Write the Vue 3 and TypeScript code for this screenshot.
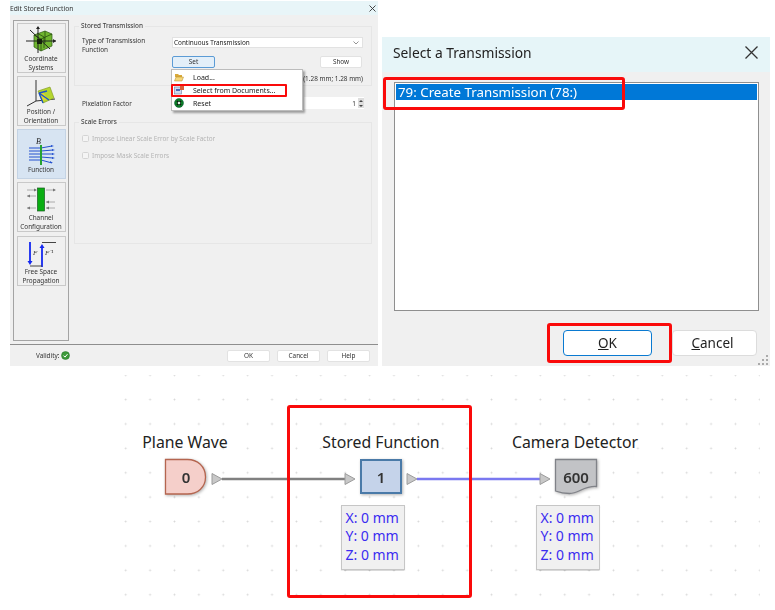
<script setup lang="ts">
const infoLines: string[] = ['X: 0 mm', 'Y: 0 mm', 'Z: 0 mm']
</script>

<template>
  <div class="page">
    <div class="top">
      <section class="dlg">
        <header class="dlg-title">
          <span>Edit Stored Function</span>
          <svg class="dlg-close" width="7" height="7" viewBox="0 0 7 7"><path d="M.5.5l6 6M6.500.5l-6 6" stroke="#333" stroke-width=".9" fill="none" /></svg>
        </header>
        <div class="dlg-main">
          <nav class="side">
            <button class="tile">
              <svg width="32" height="28" viewBox="0 0 32 28">
                <path d="M9 9l11-4 7 3v12l-11 5-7-4z" fill="#6fb52e" stroke="#2c5a12" stroke-width=".7" />
                <path d="M9 9l7 4 11-5M16 13v12M12 7l7 4v11M20 5v12" fill="none" stroke="#1e3d0c" stroke-width=".7" />
                <path d="M1 15h30M13 1v26M5 4l20 19" stroke="#222" stroke-width="1" fill="none" />
                <path d="M31 15l-3-2v4zM13 0l-2 3h4z" fill="#222" />
                <rect x="12" y="13" width="5" height="5" fill="#16220c" />
              </svg>
              <span>Coordinate<br />Systems</span>
            </button>
            <button class="tile">
              <svg width="32" height="28" viewBox="0 0 32 28">
                <path d="M11 1v21M11 22l19-2M11 22l-9 5" stroke="#333" stroke-width="1" fill="none" />
                <path d="M13 12l12-4 4 11-11 5z" fill="#b5d62f" stroke="#7b9420" stroke-width=".6" />
                <path d="M14 13l4 9 4-2-4-8z" fill="#f0d72e" opacity=".7" />
                <path d="M14 14l10 7M14 14l4 10M14 14l8-2" stroke="#1c54c8" stroke-width="1.300" fill="none" />
              </svg>
              <span>Position /<br />Orientation</span>
            </button>
            <button class="tile tile-on">
              <svg width="32" height="28" viewBox="0 0 32 28">
                <text x="11" y="7" class="tile-b">B</text>
                <path d="M4 11h12l11-2M4 14h12l12-1M4 17h24M4 20h12l12 1M4 23h12l11 3" stroke="#2351cf" stroke-width="1" fill="none" />
                <path d="M29 9l-3-1v2zM30 13l-3-1v2zM30 17l-3-1v2zM30 21l-3-1v2zM28 26l-3-2v2z" fill="#2351cf" />
                <path d="M16 8v20" stroke="#26a232" stroke-width="2" />
              </svg>
              <span>Function</span>
            </button>
            <button class="tile">
              <svg width="32" height="26" viewBox="0 0 32 26">
                <rect x="12.500" y="1" width="7" height="23" fill="#0aae12" stroke="#185c20" stroke-width=".7" />
                <path d="M2 3h9M21 3h9M2 9h9M21 15h9M2 21h9M21 21h9" stroke="#999" stroke-width=".8" fill="none" />
                <path d="M12 3l-3-1.500v3zM31 3l-3-1.500v3zM2 9l3-1.500v3zM21 15l3-1.500v3zM2 21l3-1.500v3zM21 21l3-1.500v3z" fill="#777" />
              </svg>
              <span>Channel<br />Configuration</span>
            </button>
            <button class="tile">
              <svg width="32" height="26" viewBox="0 0 32 26">
                <path d="M5 1v21M17 26V5" stroke="#1428f0" stroke-width="1.800" fill="none" />
                <path d="M5 24l-2.500-4h5zM17 3l-2.500 4h5z" fill="#1428f0" />
                <path d="M5 25h12M17 1.500h14" stroke="#444" stroke-width="1.200" fill="none" />
                <text x="8" y="14" class="tile-f">F</text>
                <text x="20" y="14" class="tile-f">F⁻¹</text>
              </svg>
              <span>Free Space<br />Propagation</span>
            </button>
          </nav>

          <div class="form">
            <fieldset class="group group-a">
              <legend>Stored Transmission</legend>
              <div class="row-type">
                <label class="lbl-type">Type of Transmission<br />Function</label>
                <div class="combo">
                  <span>Continuous Transmission</span>
                  <svg width="6" height="4" viewBox="0 0 6 4"><path d="M.5.500l2.500 2.500 2.500-2.500" fill="none" stroke="#666" stroke-width=".7" /></svg>
                </div>
              </div>
              <div class="row-btn">
                <button class="btn btn-set">Set</button>
                <button class="btn btn-show">Show</button>
              </div>
              <div class="row-size">(1.28 mm; 1.28 mm)</div>
            </fieldset>

            <div class="row-pix">
              <span>Pixelation Factor</span>
              <div class="spin">
                <span>1</span>
                <span class="spin-arrows">
                  <i class="up"></i>
                  <i class="down"></i>
                </span>
              </div>
            </div>

            <fieldset class="group group-b">
              <legend>Scale Errors</legend>
              <label class="chk"><i></i>Impose Linear Scale Error by Scale Factor</label>
              <label class="chk"><i></i>Impose Mask Scale Errors</label>
            </fieldset>

            <div class="menu">
              <div class="menu-item">
                <svg width="10" height="9" viewBox="0 0 10 9">
                  <path d="M1 1h3l1 1h3v2H1z" fill="#d9a93a" />
                  <path d="M.5 8L2 4h7.500L8 8z" fill="#f4d67a" stroke="#b58a2a" stroke-width=".5" />
                </svg>
                <span>Load...</span>
              </div>
              <div class="menu-item menu-mark">
                <svg width="10" height="9" viewBox="0 0 10 9">
                  <rect x=".5" y="1" width="7" height="7" fill="#cfd9ee" stroke="#6c7fa6" stroke-width=".6" />
                  <rect x="2" y="3" width="4" height="2" fill="#4b6bb5" />
                  <rect x="6" y="0" width="4" height="4" fill="#d9603a" />
                </svg>
                <span>Select from Documents...</span>
              </div>
              <div class="menu-item">
                <svg width="10" height="10" viewBox="0 0 10 10">
                  <circle cx="5" cy="5" r="4.500" fill="#0c7d26" stroke="#053" stroke-width=".5" />
                  <path d="M3 3l4 4M7 3l-4 4" stroke="#111" stroke-width="1.500" />
                  <circle cx="5" cy="5" r="1.200" fill="#eee" />
                </svg>
                <span>Reset</span>
              </div>
            </div>
          </div>
        </div>
        <footer class="dlg-foot">
          <span class="validity">Validity:</span>
          <svg width="9" height="9" viewBox="0 0 9 9">
            <circle cx="4.500" cy="4.500" r="4" fill="#3d9a3a" stroke="#24702a" stroke-width=".5" />
            <path d="M2.500 4.600l1.500 1.500 2.500-3" stroke="#fff" stroke-width="1" fill="none" />
          </svg>
          <div class="foot-btns">
            <button class="btn">OK</button>
            <button class="btn">Cancel</button>
            <button class="btn">Help</button>
          </div>
        </footer>
      </section>

      <section class="pick">
        <header class="pick-title">
          <span>Select a Transmission</span>
          <svg width="15" height="15" viewBox="0 0 15 15"><path d="M1.500 1.500l12 12M13.500 1.500l-12 12" stroke="#333" stroke-width="1.300" fill="none" /></svg>
        </header>
        <div class="pick-body">
          <div class="list">
            <div class="list-sel">79: Create Transmission (78:)</div>
          </div>
          <div class="pick-btns">
            <button class="pbtn pbtn-ok"><u>O</u>K</button>
            <button class="pbtn pbtn-cancel"><u>C</u>ancel</button>
          </div>
          <svg class="grip" width="11" height="11" viewBox="0 0 11 11">
            <g fill="#aaa">
              <rect x="8" y="0" width="2" height="2" />
              <rect x="4" y="4" width="2" height="2" />
              <rect x="8" y="4" width="2" height="2" />
              <rect x="0" y="8" width="2" height="2" />
              <rect x="4" y="8" width="2" height="2" />
              <rect x="8" y="8" width="2" height="2" />
            </g>
          </svg>
        </div>
        <i class="mark mark-list"></i>
        <i class="mark mark-ok"></i>
      </section>
    </div>

    <div class="diagram">
      <svg class="wires" width="640" height="235" viewBox="0 0 640 235">
        <path d="M102 104h124" stroke="#808080" stroke-width="2.500" fill="none" />
        <path d="M297 104h124" stroke="#7a78f0" stroke-width="2.500" fill="none" />
        <g fill="#c8c8c8" stroke="#9c9c9c" stroke-width="1">
          <path d="M92 98.500l10 5.500-10 5.500z" />
          <path d="M225 98.500l10 5.500-10 5.500z" />
          <path d="M287 98.500l10 5.500-10 5.500z" />
          <path d="M420 98.500l10 5.500-10 5.500z" />
        </g>
      </svg>

      <div class="cap cap-a">Plane Wave</div>
      <div class="cap cap-b">Stored Function</div>
      <div class="cap cap-c">Camera Detector</div>

      <div class="node node-a">
        <svg width="44" height="38" viewBox="0 0 44 38">
          <path d="M1.500 1.500h22c10 0 18 7 18 17.500s-8 17-18 17h-22z" fill="#f5cfca" stroke="#b5654f" stroke-width="1.300" />
        </svg>
        <span>0</span>
      </div>
      <div class="node node-b"><span>1</span></div>
      <div class="node node-c">
        <svg width="44" height="38" viewBox="0 0 44 38">
          <path d="M1.500 1.500h41v27c-12-1-18 7-27 7-6 0-10-1-14-2.500z" fill="#c2c3c6" stroke="#808288" stroke-width="1.300" />
        </svg>
        <span>600</span>
      </div>

      <div class="info info-b">
        <div v-for="l in infoLines" :key="l">{{ l }}</div>
      </div>
      <div class="info info-c">
        <div v-for="l in infoLines" :key="l">{{ l }}</div>
      </div>

      <i class="frame"></i>
    </div>
  </div>
</template>

<style>
html, body { margin: 0; background: #fff; }
</style>

<style scoped>
.page { width: 775px; height: 610px; overflow: hidden; background: #fff; font-family: "Noto Sans", "Open Sans", sans-serif; color: #222; }
.top { display: flex; align-items: flex-start; height: 366px; }
button { font-family: inherit; padding: 0; }

/* left dialog */
.dlg { width: 368px; height: 365px; margin: 1px 0 0 10px; background: #f0f0f0; display: flex; flex-direction: column; filter: blur(.4px); font-size: 6.4px; flex: none; }
.dlg-title { height: 14px; background: #e8f5f8; display: flex; align-items: center; justify-content: space-between; font-size: 6.700px; padding-right: 2px; color: #333; }
.dlg-main { flex: 1; display: flex; position: relative; }
.side { width: 56px; height: 321px; margin: 5px 0 0 3px; border: 1.500px solid #a4a4a4; padding: 1.500px 2.500px; display: flex; flex-direction: column; gap: 3.250px; box-sizing: border-box; background: #f0f0f0; flex: none; }
.tile { width: 49px; height: 50px; flex: none; border: 1px solid #c9c9c9; background: #f0f0f0; display: flex; flex-direction: column; align-items: center; justify-content: flex-end; font-size: 6.400px; line-height: 9px; color: #333; box-sizing: border-box; }
.tile-on { background: #d7e4f2; border-color: #c4d3e4; padding-bottom: 4.500px; }
.tile-b { font: italic 8px "Liberation Serif", serif; fill: #222; }
.tile-f { font: italic 7px "Liberation Serif", serif; fill: #333; }
.form { flex: 1; position: relative; padding: 0 6px 0 5px; }
.group { border: 1px solid #e6e6e6; margin: 0; padding: 0; position: relative; box-sizing: border-box; width: 298px; }
.group legend { font-size: 6.400px; font-weight: 500; padding: 0 2px; margin-left: 4px; line-height: 8px; color: #444; }
.group-a { height: 64px; margin-top: 7px; }
.group-b { height: 126px; margin-top: 9px; }
.row-type { display: flex; margin: 6px 0 0 7px; }
.lbl-type { width: 90px; line-height: 9px; color: #333; }
.combo { width: 191px; height: 11px; background: #fff; border: 1px solid #e2e2e2; box-sizing: border-box; display: flex; align-items: center; justify-content: space-between; padding: 0 3px 0 1px; color: #222; margin-top: 1px; }
.row-btn { display: flex; margin: 2px 0 0 97px; gap: 105px; }
.btn { width: 43px; height: 12px; background: #fff; border: 1px solid #e2e2e2; border-radius: 2px; font-size: 6.400px; color: #333; line-height: 10px; box-sizing: border-box; }
.btn-set { background: #e3eff9; border-color: #5b9bd5; }
.btn-show { width: 42px; }
.row-size { text-align: right; margin: 7px 8px 0 0; line-height: 8px; color: #333; }
.row-pix { display: flex; justify-content: space-between; align-items: center; margin: 11px 0 0 8px; width: 282px; height: 12px; color: #333; }
.spin { width: 60px; height: 12px; background: #fff; display: flex; align-items: center; justify-content: flex-end; gap: 2px; }
.spin-arrows { width: 6px; height: 10px; background: #ddd; display: flex; flex-direction: column; align-items: center; justify-content: space-around; }
.spin-arrows i { width: 0; height: 0; border-left: 2px solid transparent; border-right: 2px solid transparent; }
.spin-arrows .up { border-bottom: 2px solid #444; }
.spin-arrows .down { border-top: 2px solid #444; }
.chk { display: flex; align-items: center; gap: 3px; margin-left: 7px; height: 9px; color: #b4b4b4; margin-top: 8px; }
.chk i { width: 7px; height: 7px; border: 1px solid #d4d4d4; border-radius: 1.500px; background: #f4f4f4; box-sizing: border-box; }
.menu { position: absolute; left: 102px; top: 54px; width: 132px; height: 42px; background: #fff; border: 1px solid #bcbcbc; box-shadow: 1.500px 1.500px 2px rgba(0, 0, 0, .35); box-sizing: border-box; padding-top: .5px; }
.menu-item { display: flex; align-items: center; gap: 9px; height: 13px; padding-left: 2px; font-size: 7px; color: #222; position: relative; }
.menu-item svg { flex: none; }
.menu-mark::after { content: ""; position: absolute; left: -1px; top: 0; width: 116px; height: 13px; border: 2px solid #fa0a0a; border-radius: 1px; box-sizing: border-box; }
.dlg-foot { height: 22px; border-top: 1px solid #8e8e8e; box-sizing: border-box; display: flex; align-items: center; padding-left: 26px; gap: 2px; }
.validity { color: #333; }
.foot-btns { margin-left: auto; margin-right: 8px; display: flex; gap: 7px; }

/* right dialog */
.pick { width: 388px; height: 329px; margin: 37px 0 0 4px; position: relative; background: #f0f0f0; filter: blur(.25px); flex: none; display: flex; flex-direction: column; }
.pick-title { height: 35px; background: #e6f5f8; display: flex; align-items: center; justify-content: space-between; padding: 0 11px 4px; font-size: 13.800px; color: #222; box-sizing: border-box; }
.pick-body { flex: 1; position: relative; padding: 10px 11px 0 12px; }
.list { height: 229px; background: #fff; border: 1px solid #8f8f8f; padding: 1px; box-sizing: border-box; }
.list-sel { height: 16px; background: #0078d7; color: #fff; font-size: 13.300px; line-height: 16px; padding-left: 2px; white-space: nowrap; }
.pick-btns { display: flex; margin: 19px 0 0 169px; gap: 20px; }
.pbtn { height: 26px; background: #fff; border-radius: 4px; font-size: 13.500px; color: #222; box-sizing: border-box; }
.pbtn-ok { width: 89px; border: 1.500px solid #0a7ad1; }
.pbtn-cancel { width: 85px; border: 1px solid #dcdcdc; padding-right: 4px; }
.grip { position: absolute; right: 1px; bottom: 0; }
.mark { position: absolute; border: 3px solid #fa0a0a; border-radius: 3px; box-sizing: border-box; }
.mark-list { left: 1px; top: 40px; width: 242px; height: 33px; }
.mark-ok { left: 165px; top: 286px; width: 125px; height: 40px; }

/* diagram */
.diagram { position: relative; width: 640px; height: 235px; margin: 9px 0 0 120px; background-image: radial-gradient(circle, #d6d6d6 .8px, transparent 1.100px); background-size: 24.400px 24.400px; background-position: -6.500px -12px; }
.wires { position: absolute; left: 0; top: 0; }
.cap { position: absolute; top: 56px; width: 140px; text-align: center; font-size: 15.800px; line-height: 22px; color: #222; white-space: nowrap; }
.cap-a { left: -5px; }
.cap-b { left: 191px; }
.cap-c { left: 385px; }
.node { position: absolute; top: 83px; width: 44px; height: 38px; display: flex; align-items: center; justify-content: center; font-size: 15px; font-weight: 600; color: #333; filter: drop-shadow(1px 1.500px 1.500px rgba(0, 0, 0, .3)); }
.node svg { position: absolute; left: 0; top: 0; }
.node span { position: relative; }
.node-a { left: 44px; }
.node-b { left: 240px; width: 42px; height: 35px; top: 84px; box-sizing: border-box; background: #c5d3ea; border: 2px solid #4a7aa8; }
.node-c { left: 434px; }
.info { position: absolute; top: 130px; width: 64px; height: 65px; background: #f0f0f0; border: 1.500px solid #c6c6c6; box-sizing: border-box; padding: 2.500px 0 0 3.500px; color: #3a2cf0; font-size: 14px; line-height: 18.500px; white-space: nowrap; box-shadow: 0 .5px 1px rgba(0, 0, 0, .15); }
.info-b { left: 221px; }
.info-c { left: 416px; }
.frame { position: absolute; left: 167px; top: 30px; width: 185px; height: 193px; border: 3px solid #fa0a0a; border-radius: 3px; box-sizing: border-box; }
</style>
